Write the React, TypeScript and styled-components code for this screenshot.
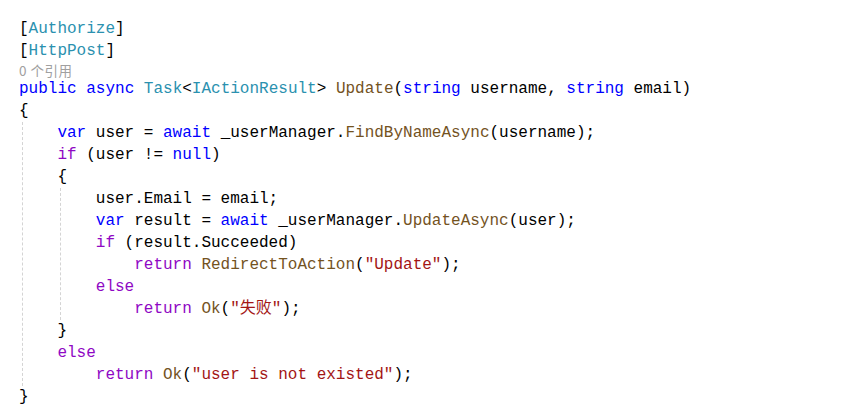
import styled, { createGlobalStyle } from 'styled-components';

type Kind = 'plain' | 'kw' | 'ctl' | 'type' | 'method' | 'str' | 'attr';
type Token = [Kind, string];

const colors: Record<Kind, string> = {
  plain: '#000000',
  kw: '#0000ff',
  ctl: '#8f08c4',
  type: '#2b91af',
  method: '#74531f',
  str: '#a31515',
  attr: '#2b91af',
};

const GlobalStyle = createGlobalStyle`
  html, body {
    margin: 0;
    padding: 0;
    background: #ffffff;
  }
`;

const Editor = styled.div`
  width: 864px;
  height: 409px;
  box-sizing: border-box;
  padding: 18px 0 0 19px;
  overflow: hidden;
  font-family: 'Liberation Mono', 'DejaVu Sans Mono', 'Noto Sans CJK SC', monospace;
  font-size: 16px;
`;

const Line = styled.div`
  height: 22px;
  line-height: 22px;
  white-space: pre;
  color: #000;
`;

const Lens = styled.div`
  height: 16px;
  line-height: 16px;
  font-family: 'Noto Sans CJK SC', 'Noto Sans', sans-serif;
  font-size: 13.5px;
  letter-spacing: 0.5px;
  color: #a0a0a0;
`;

const Block = styled.div`
  margin-left: 3px;
  border-left: 1px dashed #d4d4d4;
  padding-left: 34.4px;
`;

const Indent = styled.div`
  padding-left: 38.4px;
`;

const Tok = styled.span<{ $kind: Kind }>`
  color: ${({ $kind }) => colors[$kind]};
`;

const Code = ({ tokens }: { tokens: Token[] }) => (
  <Line>
    {tokens.map(([kind, text], i) => (
      <Tok key={i} $kind={kind}>
        {text}
      </Tok>
    ))}
  </Line>
);

const App = () => (
  <>
    <GlobalStyle />
    <Editor>
      <Code tokens={[['plain', '['], ['attr', 'Authorize'], ['plain', ']']]} />
      <Code tokens={[['plain', '['], ['attr', 'HttpPost'], ['plain', ']']]} />
      <Lens>0 个引用</Lens>
      <Code
        tokens={[
          ['kw', 'public'],
          ['plain', ' '],
          ['kw', 'async'],
          ['plain', ' '],
          ['type', 'Task'],
          ['plain', '<'],
          ['type', 'IActionResult'],
          ['plain', '> '],
          ['method', 'Update'],
          ['plain', '('],
          ['kw', 'string'],
          ['plain', ' username, '],
          ['kw', 'string'],
          ['plain', ' email)'],
        ]}
      />
      <Code tokens={[['plain', '{']]} />
      <Block>
        <Code
          tokens={[
            ['kw', 'var'],
            ['plain', ' user = '],
            ['kw', 'await'],
            ['plain', ' _userManager.'],
            ['method', 'FindByNameAsync'],
            ['plain', '(username);'],
          ]}
        />
        <Code tokens={[['ctl', 'if'], ['plain', ' (user != '], ['kw', 'null'], ['plain', ')']]} />
        <Code tokens={[['plain', '{']]} />
        <Block>
          <Code tokens={[['plain', 'user.Email = email;']]} />
          <Code
            tokens={[
              ['kw', 'var'],
              ['plain', ' result = '],
              ['kw', 'await'],
              ['plain', ' _userManager.'],
              ['method', 'UpdateAsync'],
              ['plain', '(user);'],
            ]}
          />
          <Code tokens={[['ctl', 'if'], ['plain', ' (result.Succeeded)']]} />
          <Indent>
            <Code
              tokens={[
                ['ctl', 'return'],
                ['plain', ' '],
                ['method', 'RedirectToAction'],
                ['plain', '('],
                ['str', '"Update"'],
                ['plain', ');'],
              ]}
            />
          </Indent>
          <Code tokens={[['ctl', 'else']]} />
          <Indent>
            <Code
              tokens={[
                ['ctl', 'return'],
                ['plain', ' '],
                ['method', 'Ok'],
                ['plain', '('],
                ['str', '"失败"'],
                ['plain', ');'],
              ]}
            />
          </Indent>
        </Block>
        <Code tokens={[['plain', '}']]} />
        <Code tokens={[['ctl', 'else']]} />
        <Indent>
          <Code
            tokens={[
              ['ctl', 'return'],
              ['plain', ' '],
              ['method', 'Ok'],
              ['plain', '('],
              ['str', '"user is not existed"'],
              ['plain', ');'],
            ]}
          />
        </Indent>
      </Block>
      <Code tokens={[['plain', '}']]} />
    </Editor>
  </>
);

export default App;
